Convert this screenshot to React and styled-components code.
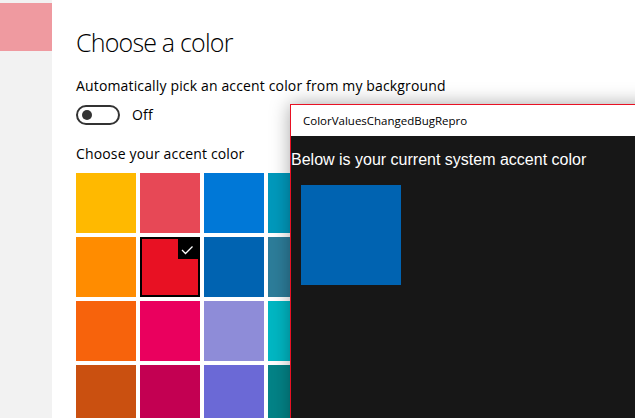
import React from 'react';
import styled, { createGlobalStyle } from 'styled-components';

const GlobalStyle = createGlobalStyle`
  html, body {
    margin: 0;
    padding: 0;
    background: #ffffff;
  }
  body {
    font-family: "Open Sans", "Noto Sans", sans-serif;
    color: #000;
  }
`;

const Screen = styled.div`
  position: relative;
  display: flex;
  width: 635px;
  height: 418px;
  overflow: hidden;
  background: #fff;
`;

const Sidebar = styled.div`
  width: 52px;
  flex-shrink: 0;
  background: #f2f2f2;
  padding-top: 3px;
  box-sizing: border-box;
`;

const SidebarHighlight = styled.div`
  height: 48px;
  background: #ef9aa0;
`;

const Content = styled.div`
  flex: 1;
  padding: 25px 0 0 24px;
  display: flex;
  flex-direction: column;
`;

const Title = styled.h1`
  margin: 0;
  font-family: "Open Sans", sans-serif;
  font-weight: 300;
  font-size: 25px;
  line-height: 34px;
  color: #000;
  letter-spacing: -0.8px;
`;

const Label = styled.div`
  font-family: "Open Sans", sans-serif;
  font-size: 14px;
  line-height: 20px;
  letter-spacing: 0.15px;
  color: #000;
  margin-top: ${p => p.$top || 0}px;
`;

const ToggleRow = styled.div`
  display: flex;
  align-items: center;
  gap: 12px;
  margin-top: 9px;
`;

const Toggle = styled.div`
  width: 44px;
  height: 20px;
  box-sizing: border-box;
  border: 2px solid #333;
  border-radius: 10px;
  display: flex;
  align-items: center;
  padding-left: 4px;
`;

const Knob = styled.div`
  width: 10px;
  height: 10px;
  border-radius: 50%;
  background: #333;
`;

const Grid = styled.div`
  display: grid;
  grid-template-columns: repeat(4, 60px);
  grid-auto-rows: 60px;
  gap: 4px;
  margin-top: 9px;
`;

const Swatch = styled.div`
  position: relative;
  background: ${p => p.$color};
  box-shadow: ${p => (p.$selected ? 'inset 0 0 0 2px #000' : 'none')};
`;

const CheckBadge = styled.div`
  position: absolute;
  top: 0;
  right: 0;
  width: 22px;
  height: 22px;
  background: #000;
`;

const Window = styled.div`
  position: absolute;
  left: 290px;
  top: 104px;
  right: -20px;
  bottom: -20px;
  display: flex;
  flex-direction: column;
  border-top: 1px solid #e81123;
  border-left: 1px solid #e81123;
  box-shadow: 0 0 18px rgba(0, 0, 0, 0.35);
`;

const TitleBar = styled.div`
  height: 31px;
  flex-shrink: 0;
  background: #fff;
  display: flex;
  align-items: center;
  padding-left: 12px;
  font-family: "Open Sans", sans-serif;
  font-size: 11.5px;
  color: #000;
`;

const WindowBody = styled.div`
  flex: 1;
  background: #171717;
  padding-top: 15px;
`;

const Message = styled.div`
  font-family: "Liberation Sans", Arial, sans-serif;
  font-size: 16px;
  line-height: 18px;
  color: #fff;
`;

const AccentPreview = styled.div`
  width: 100px;
  height: 100px;
  margin: 16px 0 0 10px;
  background: #0063b1;
`;

const colors = [
  '#ffb900', '#e74856', '#0078d7', '#0099bc',
  '#ff8c00', '#e81123', '#0063b1', '#2d7d9a',
  '#f7630c', '#ea005e', '#8e8cd8', '#00b7c3',
  '#ca5010', '#c30052', '#6b69d6', '#038387',
];

const Check = () => (
  <svg width="22" height="22" viewBox="0 0 22 22">
    <polyline points="4,13 7.5,16.5 14.5,9.5" fill="none" stroke="#fff" strokeWidth="1.3" />
  </svg>
);

const App = () => (
  <Screen>
    <GlobalStyle />
    <Sidebar>
      <SidebarHighlight />
    </Sidebar>
    <Content>
      <Title>Choose a color</Title>
      <Label $top={17}>Automatically pick an accent color from my background</Label>
      <ToggleRow>
        <Toggle>
          <Knob />
        </Toggle>
        <Label>Off</Label>
      </ToggleRow>
      <Label $top={19}>Choose your accent color</Label>
      <Grid>
        {colors.map((c, i) => (
          <Swatch key={i} $color={c} $selected={i === 5}>
            {i === 5 && (
              <CheckBadge>
                <Check />
              </CheckBadge>
            )}
          </Swatch>
        ))}
      </Grid>
    </Content>
    <Window>
      <TitleBar>ColorValuesChangedBugRepro</TitleBar>
      <WindowBody>
        <Message>Below is your current system accent color</Message>
        <AccentPreview />
      </WindowBody>
    </Window>
  </Screen>
);

export default App;
